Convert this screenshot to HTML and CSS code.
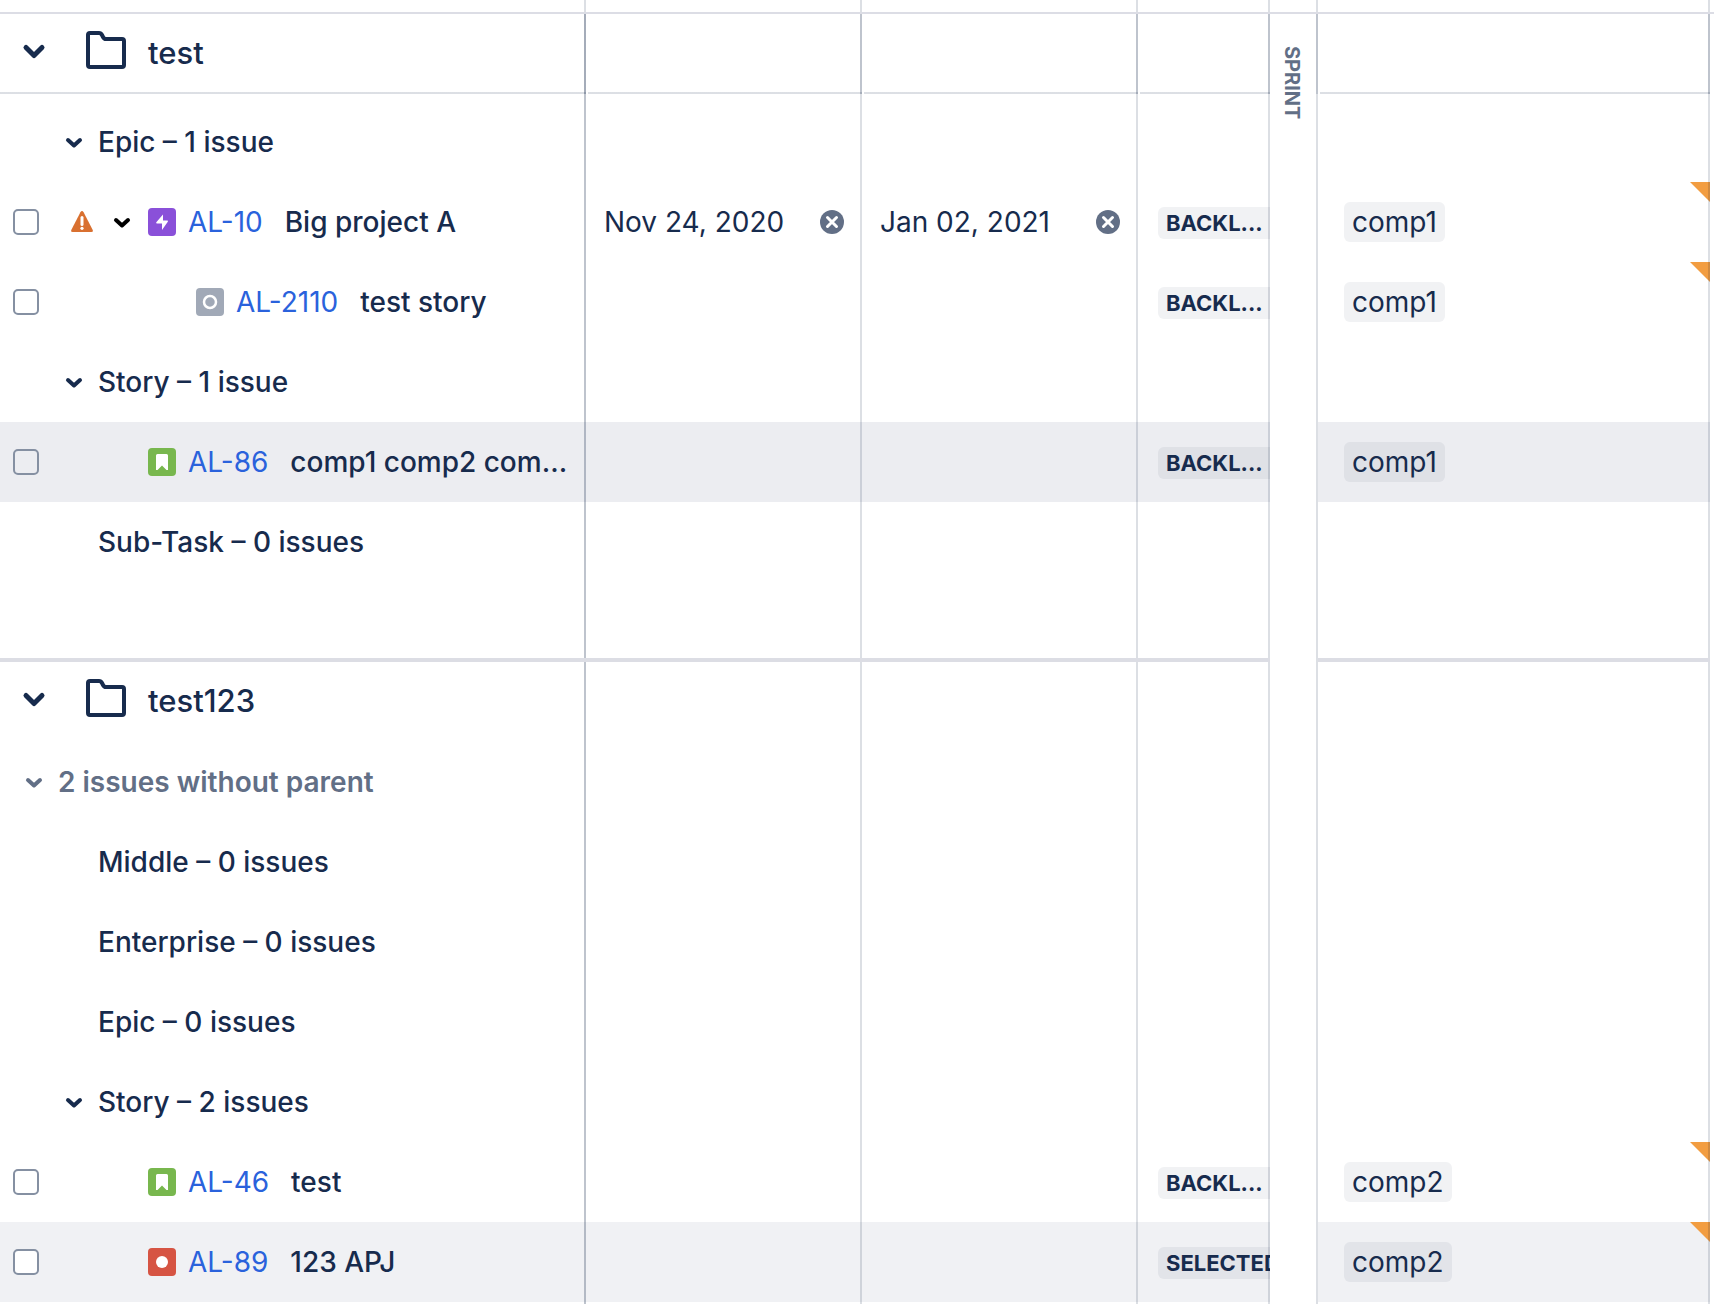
FILE: index.html
```
<!DOCTYPE html>
<html lang="en">
<head>
  <meta charset="UTF-8">
  <meta name="viewport" content="width=device-width, initial-scale=1.0">
  <title>Plan timeline</title>
  <link rel="stylesheet" href="styles.css">
</head>
<body>

<!-- Shared icons -->
<svg class="sprite" aria-hidden="true">
  <symbol id="chevron" viewBox="0 0 24 24">
    <path d="M6 10l6 5.500 6-5.500" fill="none" stroke="currentColor" stroke-width="4" stroke-linecap="round" stroke-linejoin="round"/>
  </symbol>
  <symbol id="chevron-lg" viewBox="0 0 32 32">
    <path d="M8 10.500l8 8 8-8" fill="none" stroke="currentColor" stroke-width="5" stroke-linecap="round" stroke-linejoin="round"/>
  </symbol>
  <symbol id="folder" viewBox="0 0 48 48">
    <path d="M8 4h9q2 0 3 2l1 2q1 2 3 2h16q2 0 2 2v24q0 2-2 2H8q-2 0-2-2V6q0-2 2-2z" fill="none" stroke="currentColor" stroke-width="4" stroke-linejoin="round"/>
  </symbol>
  <symbol id="warning" viewBox="0 0 24 24">
    <path d="M10.400 2.200q1.600-2.600 3.200 0l9 17.600q1 2.200-1.200 2.200H2.600q-2.200 0-1.200-2.200z" fill="#d97030"/>
    <path d="M12 7.500v7" stroke="#fff" stroke-width="3" stroke-linecap="round"/>
    <circle cx="12" cy="18.300" r="1.600" fill="#fff"/>
  </symbol>
  <symbol id="clear" viewBox="0 0 24 24">
    <circle cx="12" cy="12" r="12" fill="#626f86"/>
    <path d="M7.500 7.500l9 9M16.500 7.500l-9 9" stroke="#fff" stroke-width="3" stroke-linecap="round"/>
  </symbol>
  <symbol id="type-epic" viewBox="0 0 28 28">
    <rect width="28" height="28" rx="4" fill="#8a50d9"/>
    <path d="M15 6.500v6h4.500q.8.200.3 1.200L14 22v-6.500H8.800q-1-.2-.5-1.200z" fill="#fff"/>
  </symbol>
  <symbol id="type-subtask" viewBox="0 0 28 28">
    <rect width="28" height="28" rx="4" fill="#a1a9b7"/>
    <circle cx="14" cy="14" r="6" fill="none" stroke="#fff" stroke-width="2.500"/>
  </symbol>
  <symbol id="type-story" viewBox="0 0 28 28">
    <rect width="28" height="28" rx="4" fill="#78b74e"/>
    <path d="M9.500 6h9q1.500 0 1.500 1.500V22h-1.500L14 17.500 9.500 22H8V7.500Q8 6 9.500 6z" fill="#fff"/>
  </symbol>
  <symbol id="type-bug" viewBox="0 0 28 28">
    <rect width="28" height="28" rx="4" fill="#d65443"/>
    <circle cx="14" cy="14" r="6" fill="#fff"/>
  </symbol>
</svg>

<table class="plan">
  <colgroup>
    <col class="col-issue">
    <col class="col-date">
    <col class="col-date">
    <col class="col-status">
    <col class="col-sprint">
    <col class="col-component">
    <col class="col-edge">
  </colgroup>
  <thead>
    <tr class="top"><td></td><td></td><td></td><td></td><td></td><td></td><td></td></tr>
  </thead>
  <tbody>
    <!-- Project: test -->
    <tr class="project pinned">
      <td>
        <div class="line">
          <button class="toggle" aria-label="Collapse test"><svg class="icon-lg"><use href="#chevron-lg"/></svg></button>
          <svg class="folder"><use href="#folder"/></svg>
          <span class="name">test</span>
        </div>
      </td>
      <td></td><td></td><td></td>
      <td class="sprint" rowspan="17">SPRINT</td>
      <td></td>
    </tr>
    <tr class="group first">
      <td>
        <div class="line">
          <button class="toggle" aria-label="Collapse epics"><svg class="icon"><use href="#chevron"/></svg></button>
          <span>Epic – 1 issue</span>
        </div>
      </td>
      <td></td><td></td><td></td><td></td>
    </tr>
    <tr class="issue">
      <td>
        <div class="line">
          <input type="checkbox" aria-label="Select AL-10">
          <span class="slot"><svg class="icon"><use href="#warning"/></svg></span>
          <button class="toggle dark" aria-label="Collapse AL-10"><svg class="icon"><use href="#chevron"/></svg></button>
          <svg class="type"><use href="#type-epic"/></svg>
          <a class="key" href="#">AL-10</a>
          <span class="title">Big project A</span>
        </div>
      </td>
      <td>
        <div class="date"><span>Nov 24, 2020</span><button aria-label="Clear start date"><svg class="icon"><use href="#clear"/></svg></button></div>
      </td>
      <td>
        <div class="date"><span>Jan 02, 2021</span><button aria-label="Clear due date"><svg class="icon"><use href="#clear"/></svg></button></div>
      </td>
      <td><span class="status">BACKL...</span></td>
      <td class="changed"><span class="chip">comp1</span></td>
    </tr>
    <tr class="issue child">
      <td>
        <div class="line">
          <input type="checkbox" aria-label="Select AL-2110">
          <span class="slot"></span>
          <span class="slot"></span>
          <svg class="type"><use href="#type-subtask"/></svg>
          <a class="key" href="#">AL-2110</a>
          <span class="title">test story</span>
        </div>
      </td>
      <td></td><td></td>
      <td><span class="status">BACKL...</span></td>
      <td class="changed"><span class="chip">comp1</span></td>
    </tr>
    <tr class="group">
      <td>
        <div class="line">
          <button class="toggle" aria-label="Collapse stories"><svg class="icon"><use href="#chevron"/></svg></button>
          <span>Story – 1 issue</span>
        </div>
      </td>
      <td></td><td></td><td></td><td></td>
    </tr>
    <tr class="issue hovered">
      <td>
        <div class="line">
          <input type="checkbox" aria-label="Select AL-86">
          <span class="slot"></span>
          <span class="slot"></span>
          <svg class="type"><use href="#type-story"/></svg>
          <a class="key" href="#">AL-86</a>
          <span class="title">comp1 comp2 com...</span>
        </div>
      </td>
      <td></td><td></td>
      <td><span class="status">BACKL...</span></td>
      <td><span class="chip">comp1</span></td>
    </tr>
    <tr class="group">
      <td><div class="line"><span class="slot"></span><span>Sub-Task – 0 issues</span></div></td>
      <td></td><td></td><td></td><td></td>
    </tr>
    <tr class="divider"><td></td><td></td><td></td><td></td><td></td></tr>

    <!-- Project: test123 -->
    <tr class="project">
      <td>
        <div class="line">
          <button class="toggle" aria-label="Collapse test123"><svg class="icon-lg"><use href="#chevron-lg"/></svg></button>
          <svg class="folder"><use href="#folder"/></svg>
          <span class="name">test123</span>
        </div>
      </td>
      <td></td><td></td><td></td><td></td>
    </tr>
    <tr class="group orphans">
      <td>
        <div class="line">
          <button class="toggle" aria-label="Collapse issues without parent"><svg class="icon"><use href="#chevron"/></svg></button>
          <span>2 issues without parent</span>
        </div>
      </td>
      <td></td><td></td><td></td><td></td>
    </tr>
    <tr class="group">
      <td><div class="line"><span class="slot"></span><span>Middle – 0 issues</span></div></td>
      <td></td><td></td><td></td><td></td>
    </tr>
    <tr class="group">
      <td><div class="line"><span class="slot"></span><span>Enterprise – 0 issues</span></div></td>
      <td></td><td></td><td></td><td></td>
    </tr>
    <tr class="group">
      <td><div class="line"><span class="slot"></span><span>Epic – 0 issues</span></div></td>
      <td></td><td></td><td></td><td></td>
    </tr>
    <tr class="group">
      <td>
        <div class="line">
          <button class="toggle" aria-label="Collapse stories"><svg class="icon"><use href="#chevron"/></svg></button>
          <span>Story – 2 issues</span>
        </div>
      </td>
      <td></td><td></td><td></td><td></td>
    </tr>
    <tr class="issue">
      <td>
        <div class="line">
          <input type="checkbox" aria-label="Select AL-46">
          <span class="slot"></span>
          <span class="slot"></span>
          <svg class="type"><use href="#type-story"/></svg>
          <a class="key" href="#">AL-46</a>
          <span class="title">test</span>
        </div>
      </td>
      <td></td><td></td>
      <td><span class="status">BACKL...</span></td>
      <td class="changed"><span class="chip">comp2</span></td>
    </tr>
    <tr class="issue selected">
      <td>
        <div class="line">
          <input type="checkbox" aria-label="Select AL-89">
          <span class="slot"></span>
          <span class="slot"></span>
          <svg class="type"><use href="#type-bug"/></svg>
          <a class="key" href="#">AL-89</a>
          <span class="title">123 APJ</span>
        </div>
      </td>
      <td></td><td></td>
      <td><span class="status">SELECTED</span></td>
      <td class="changed"><span class="chip">comp2</span></td>
    </tr>
    <tr class="end"><td></td><td></td><td></td><td></td><td></td></tr>
  </tbody>
</table>

</body>
</html>
```
FILE: styles.css
```
:root {
  --text: #172b4d;
  --subtle: #626f86;
  --link: #2a62dc;
  --rule: rgba(9, 30, 66, 0.14);
  --fill: rgba(9, 30, 66, 0.06);
}

* {
  box-sizing: border-box;
}

body {
  margin: 0;
  background: #fff;
  color: var(--text);
  font-family: Inter, "Liberation Sans", sans-serif;
  font-size: 28px;
  line-height: 40px;
}

button {
  padding: 0;
  border: 0;
  background: none;
  color: inherit;
  cursor: pointer;
}

svg {
  display: block;
  flex: none;
}

.sprite {
  position: absolute;
  width: 0;
  height: 0;
}

/* Table */
.plan {
  width: 100%;
  table-layout: fixed;
  border-collapse: separate;
  border-spacing: 0;
}

.col-issue { width: 586px; }
.col-date { width: 276px; }
.col-status { width: 132px; }
.col-sprint { width: 48px; }
.col-edge { width: 4px; }

.plan td {
  position: relative;
  height: 80px;
  padding: 0;
  overflow: hidden;
  white-space: nowrap;
}

/* Column rules are drawn over the cell content */
.plan td::after {
  content: "";
  position: absolute;
  top: 0;
  right: 0;
  bottom: 0;
  width: 2px;
  background: var(--rule);
}

.plan tbody td:first-child::after {
  background: linear-gradient(var(--rule), var(--rule)), var(--rule);
}

.plan .top td {
  height: 14px;
  border-bottom: 2px solid #dcdde5;
}

.plan .top td:last-child::after {
  display: none;
}

.plan .pinned td {
  background: linear-gradient(var(--rule), var(--rule)) 2px 100% / 100% 2px no-repeat;
}

.plan .pinned td:first-child {
  background-position: 0 100%;
}

.plan .pinned td::after {
  background: linear-gradient(var(--rule), var(--rule)), var(--rule);
}

.plan .pinned td:first-child::after {
  background: linear-gradient(var(--rule), var(--rule)), linear-gradient(var(--rule), var(--rule)), var(--rule);
}

.plan .first td {
  height: 88px;
  padding-top: 8px;
}

.plan .divider td {
  border-bottom: 4px solid #dcdde4;
}

.plan .divider td::after {
  bottom: -4px;
}

.plan .end td {
  height: 2px;
}

.hovered {
  background: #ecedf1;
}

.selected {
  background: #f0f1f4;
}

/* Collapsed sprint column */
.plan .pinned .sprint {
  padding: 32px 16px 0 0;
  background: #fff;
  color: var(--subtle);
  font-size: 20px;
  font-weight: 700;
  line-height: 20px;
  text-align: left;
  vertical-align: top;
  writing-mode: vertical-rl;
}

.plan .pinned .sprint::after {
  background: linear-gradient(var(--rule), var(--rule)) 0 0 / 2px 80px no-repeat, var(--rule);
}

/* First column */
.line {
  display: flex;
  align-items: center;
  height: 80px;
}

.slot,
.toggle {
  display: flex;
  flex: none;
  justify-content: center;
  align-items: center;
  width: 40px;
  height: 40px;
}

.icon {
  width: 24px;
  height: 24px;
}

.icon-lg {
  width: 32px;
  height: 32px;
}

.project .line {
  padding: 0 0 2px 14px;
}

.folder {
  width: 48px;
  height: 48px;
  margin: 0 18px 0 28px;
}

.name {
  font-size: 31px;
  font-weight: 500;
}

.group .line {
  gap: 4px;
  padding-left: 54px;
  font-weight: 500;
}

.orphans .line {
  padding-left: 14px;
  color: var(--subtle);
  font-weight: 600;
}

.issue input {
  flex: none;
  width: 26px;
  height: 26px;
  margin: 0 23px 0 13px;
  border: 2px solid #8590a2;
  border-radius: 5px;
  background: #fff;
  appearance: none;
}

.hovered input {
  background: transparent;
}

.dark {
  color: #000;
}

.type {
  width: 28px;
  height: 28px;
  margin: 0 12px 0 6px;
}

.child .type {
  margin-left: 54px;
}

.key {
  color: var(--link);
  text-decoration: none;
}

.title {
  margin-left: 22px;
  font-weight: 500;
}

/* Value cells */
.date {
  display: flex;
  justify-content: space-between;
  align-items: center;
  padding: 0 18px;
}

.status {
  display: block;
  width: 140px;
  margin: 2px 0 0 20px;
  padding: 0 8px;
  border-radius: 6px;
  background: var(--fill);
  font-size: 22px;
  font-weight: 700;
  line-height: 32px;
}

.chip {
  display: block;
  width: fit-content;
  margin-left: 26px;
  padding: 0 8px;
  border-radius: 6px;
  background: var(--fill);
}

/* Corner flag on a cell with an unsaved change */
.changed::before {
  content: "";
  position: absolute;
  top: 0;
  right: 0;
  width: 20px;
  height: 20px;
  background: #f29d41;
  clip-path: polygon(0 0, 100% 0, 100% 100%);
}
```
